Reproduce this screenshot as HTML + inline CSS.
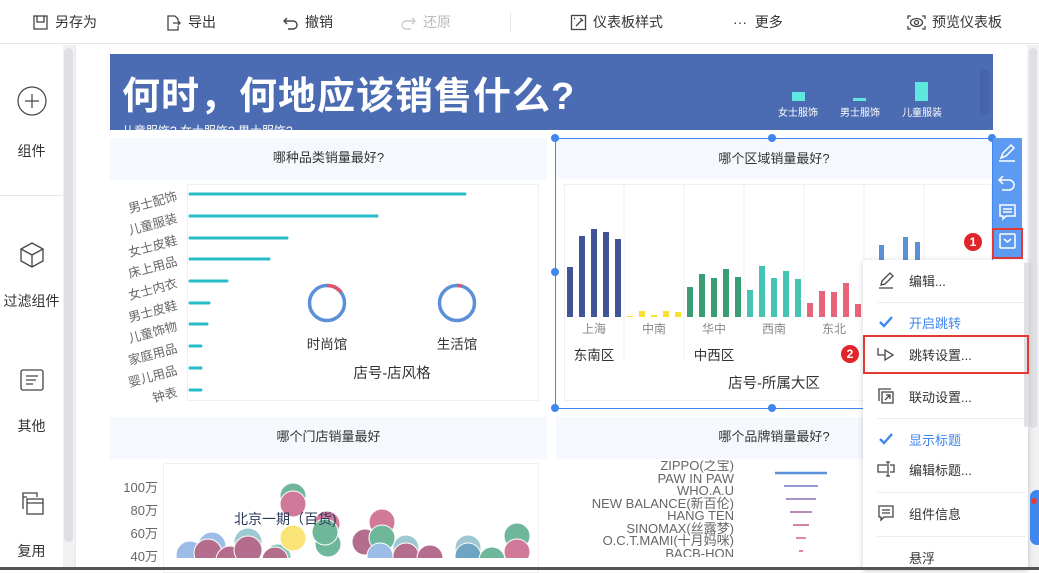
<!DOCTYPE html>
<html><head><meta charset="utf-8">
<style>
*{margin:0;padding:0;box-sizing:border-box}
body{width:1039px;height:570px;overflow:hidden;background:#fff;font-family:"Liberation Sans","Noto Sans CJK SC",sans-serif;position:relative;color:#333}
.a{position:absolute}
.tb{font-size:14px;color:#333;top:12px;display:flex;align-items:center;gap:6px}
.tb svg{width:17px;height:17px}
.side{font-size:14px;color:#333;text-align:center;width:63px;left:0}
.pt{background:#f5f8fd;font-size:13px;color:#333;text-align:center;line-height:40px}
.mi{position:absolute;left:0;width:165px;height:32px;font-size:13px;color:#333;display:flex;align-items:center}
.mi .ic{width:46px;display:flex;justify-content:center}
.sep{position:absolute;left:14px;width:148px;height:1px;background:#eee}
</style></head><body>
<!-- toolbar -->
<div class="a" style="left:0;top:0;width:1039px;height:44px;border-bottom:1px solid #e6e6e6"></div>
<div class="a tb" style="left:32px"><svg viewBox="0 0 17 17" fill="none" stroke="#444" stroke-width="1.3"><rect x="2" y="2" width="13" height="13"/><path d="M5 2v6h7V2"/></svg>另存为</div>
<div class="a tb" style="left:165px"><svg viewBox="0 0 17 17" fill="none" stroke="#444" stroke-width="1.3"><path d="M10 2H3v14h10v-4M10 2l3 3v2M8 9h7M13 7l2 2-2 2"/></svg>导出</div>
<div class="a tb" style="left:282px"><svg viewBox="0 0 17 17" fill="none" stroke="#444" stroke-width="1.4"><path d="M5 4L2 7l3 3M2 7h9a4 4 0 010 8H6"/></svg>撤销</div>
<div class="a tb" style="left:400px;color:#bbb"><svg viewBox="0 0 17 17" fill="none" stroke="#ccc" stroke-width="1.4"><path d="M12 4l3 3-3 3M15 7H6a4 4 0 000 8h5"/></svg>还原</div>
<div class="a" style="left:510px;top:12px;width:1px;height:20px;background:#e6e6e6"></div>
<div class="a tb" style="left:570px"><svg viewBox="0 0 17 17" fill="none" stroke="#444" stroke-width="1.3"><rect x="1.5" y="1.5" width="14" height="14"/><path d="M6 12l6-6M10 4l3 3M4 4l1 1"/></svg>仪表板样式</div>
<div class="a tb" style="left:733px">··· &nbsp;更多</div>
<div class="a tb" style="left:907px"><svg viewBox="0 0 19 17" style="width:19px" fill="none" stroke="#444" stroke-width="1.3"><path d="M1 5V2h3M15 2h3v3M18 12v3h-3M4 15H1v-3"/><ellipse cx="9.5" cy="8.5" rx="6" ry="4"/><circle cx="9.5" cy="8.5" r="2"/></svg>预览仪表板</div>

<!-- sidebar -->
<div class="a" style="left:63px;top:45px;width:12px;height:525px;background:#f1f1f3"></div>
<div class="a" style="left:64px;top:48px;width:9px;height:494px;background:#dfe0e4;border-radius:5px"></div>
<div class="a" style="left:75px;top:45px;width:1px;height:525px;background:#e8e8e8"></div>
<div class="a" style="left:0;top:195px;width:63px;height:1px;background:#e6e6e6"></div>
<svg class="a" style="left:17px;top:86px" width="30" height="30" viewBox="0 0 30 30" fill="none" stroke="#444" stroke-width="1.2"><circle cx="15" cy="15" r="14"/><path d="M15 8v14M8 15h14"/></svg>
<div class="a side" style="top:141px">组件</div>
<svg class="a" style="left:19px;top:241px" width="26" height="28" viewBox="0 0 26 28" fill="none" stroke="#444" stroke-width="1.3"><path d="M13 2l11 6v12l-11 6-11-6V8zM2 8l11 6 11-6M13 14v12"/></svg>
<div class="a side" style="top:291px;font-size:14px">过滤组件</div>
<svg class="a" style="left:20px;top:369px" width="24" height="22" viewBox="0 0 24 22" fill="none" stroke="#444" stroke-width="1.3"><rect x="1" y="1" width="22" height="20" rx="2"/><path d="M6 7h12M6 11h10M6 15h7"/></svg>
<div class="a side" style="top:416px">其他</div>
<svg class="a" style="left:20px;top:491px" width="24" height="26" viewBox="0 0 24 26" fill="none" stroke="#444" stroke-width="1.3"><path d="M3 18V2h14v4"/><rect x="7" y="8" width="16" height="15"/><path d="M7 12h16M3 6h4"/></svg>
<div class="a side" style="top:541px">复用</div>

<!-- right scrollbar -->
<div class="a" style="left:1027px;top:45px;width:12px;height:525px;background:#f1f1f3"></div>
<div class="a" style="left:1029px;top:48px;width:8px;height:380px;background:#dfe0e4;border-radius:4px"></div>

<!-- banner -->
<div class="a" style="left:110px;top:54px;width:883px;height:76px;background:#4b6cb3;overflow:hidden">
<div class="a" style="left:12px;top:19px;font-size:38px;font-weight:bold;color:#fff;letter-spacing:1px;white-space:nowrap;line-height:48px">何时，何地应该销售什么?</div>
<div class="a" style="left:12px;top:68px;font-size:12px;color:#fff;white-space:nowrap">儿童服饰? 女士服饰? 男士服饰?</div>
<div class="a" style="left:682px;top:38px;width:13px;height:9px;background:#5ee8e0"></div>
<div class="a" style="left:668px;top:50px;font-size:10px;color:#fff">女士服饰</div>
<div class="a" style="left:743px;top:44px;width:13px;height:3px;background:#5ee8e0"></div>
<div class="a" style="left:730px;top:50px;font-size:10px;color:#fff">男士服饰</div>
<div class="a" style="left:805px;top:28px;width:13px;height:19px;background:#5ee8e0"></div>
<div class="a" style="left:792px;top:50px;font-size:10px;color:#fff">儿童服装</div>
<div class="a" style="left:870px;top:16px;width:9px;height:45px;background:#4664ab;border-radius:4px"></div>
</div>

<!-- panel 1 -->
<div class="a pt" style="left:110px;top:138px;width:437px;height:42px">哪种品类销量最好?</div>
<div class="a" style="left:187px;top:184px;width:352px;height:217px;border:1px solid #f0f0f0"></div>
<svg class="a" style="left:100px;top:180px" width="450" height="230" font-family="Liberation Sans,Noto Sans CJK SC,sans-serif">
<g stroke="#26bcc8" stroke-width="3" stroke-linecap="round">
<line x1="90" y1="14" x2="365" y2="14"/><line x1="90" y1="36" x2="277" y2="36"/><line x1="90" y1="58" x2="187" y2="58"/><line x1="90" y1="79" x2="169" y2="79"/><line x1="90" y1="101" x2="127" y2="101"/><line x1="90" y1="123" x2="109" y2="123"/><line x1="90" y1="144" x2="107" y2="144"/><line x1="90" y1="166" x2="101" y2="166"/><line x1="90" y1="188" x2="101" y2="188"/><line x1="90" y1="210" x2="101" y2="210"/></g>
<g font-size="12.5" fill="#666" text-anchor="end">
<text transform="translate(78,20) rotate(-15)">男士配饰</text><text transform="translate(78,42) rotate(-15)">儿童服装</text><text transform="translate(78,64) rotate(-15)">女士皮鞋</text><text transform="translate(78,85) rotate(-15)">床上用品</text><text transform="translate(78,107) rotate(-15)">女士内衣</text><text transform="translate(78,129) rotate(-15)">男士皮鞋</text><text transform="translate(78,150) rotate(-15)">儿童饰物</text><text transform="translate(78,172) rotate(-15)">家庭用品</text><text transform="translate(78,194) rotate(-15)">婴儿用品</text><text transform="translate(78,216) rotate(-15)">钟表</text></g>
<circle cx="227" cy="123" r="17.5" fill="none" stroke="#5b8fd6" stroke-width="3.5"/>
<path d="M227 105.5A17.5 17.5 0 0 1 241 112" fill="none" stroke="#e0556a" stroke-width="3.5"/>
<circle cx="357" cy="123" r="17.5" fill="none" stroke="#5b8fd6" stroke-width="3.5"/>
<path d="M357 105.5A17.5 17.5 0 0 1 362 106" fill="none" stroke="#e0556a" stroke-width="3.5"/>
<text x="227" y="169" font-size="13.5" fill="#333" text-anchor="middle">时尚馆</text>
<text x="357" y="169" font-size="13.5" fill="#333" text-anchor="middle">生活馆</text>
<text x="292" y="198" font-size="14.5" fill="#333" text-anchor="middle">店号-店风格</text>
</svg>

<!-- panel 2 -->
<div class="a pt" style="left:556px;top:139px;width:436px;height:40px">哪个区域销量最好?</div>
<div class="a" style="left:564px;top:184px;width:428px;height:217px;border:1px solid #f0f0f0"></div>
<svg class="a" style="left:555px;top:180px" width="440" height="230" font-family="Liberation Sans,Noto Sans CJK SC,sans-serif">
<g stroke="#f0f0f0"><line x1="69" y1="4" x2="69" y2="180"/><line x1="129" y1="4" x2="129" y2="180"/><line x1="189" y1="4" x2="189" y2="140"/><line x1="249" y1="4" x2="249" y2="140"/><line x1="309" y1="4" x2="309" y2="140"/><line x1="369" y1="4" x2="369" y2="140"/></g>
<g fill="#3f5597"><rect x="12" y="87" width="6" height="50"/><rect x="24" y="56" width="6" height="81"/><rect x="36" y="49" width="6" height="88"/><rect x="48" y="52" width="6" height="85"/><rect x="60" y="59" width="6" height="78"/></g>
<g fill="#f6e12e"><rect x="72" y="136" width="6" height="1"/><rect x="84" y="131" width="6" height="6"/><rect x="96" y="135" width="6" height="2"/><rect x="108" y="131" width="6" height="6"/><rect x="120" y="132" width="6" height="5"/></g>
<g fill="#3a9d74"><rect x="132" y="107" width="6" height="30"/><rect x="144" y="94" width="6" height="43"/><rect x="156" y="98" width="6" height="39"/><rect x="168" y="89" width="6" height="48"/><rect x="180" y="97" width="6" height="40"/></g>
<g fill="#45c3b3"><rect x="192" y="110" width="6" height="27"/><rect x="204" y="86" width="6" height="51"/><rect x="216" y="98" width="6" height="39"/><rect x="228" y="91" width="6" height="46"/><rect x="240" y="99" width="6" height="38"/></g>
<g fill="#e8647a"><rect x="252" y="123" width="6" height="14"/><rect x="264" y="111" width="6" height="26"/><rect x="276" y="112" width="6" height="25"/><rect x="288" y="103" width="6" height="34"/><rect x="300" y="124" width="6" height="13"/></g>
<g fill="#5b8fd6"><rect x="324" y="65" width="5" height="72"/><rect x="348" y="57" width="5" height="80"/><rect x="360" y="62" width="5" height="75"/></g>
<g font-size="12" fill="#888" text-anchor="middle"><text x="39" y="153">上海</text><text x="99" y="153">中南</text><text x="159" y="153">华中</text><text x="219" y="153">西南</text><text x="279" y="153">东北</text></g>
<text x="39" y="180" font-size="13.5" fill="#333" text-anchor="middle">东南区</text>
<text x="159" y="180" font-size="13.5" fill="#333" text-anchor="middle">中西区</text>
<text x="219" y="208" font-size="14.5" fill="#333" text-anchor="middle">店号-所属大区</text>
</svg>
<!-- selection -->
<div class="a" style="left:555px;top:138px;width:438px;height:271px;border:1px solid #3f86ee"></div>
<div class="a" style="left:551px;top:134px;width:8px;height:8px;border-radius:50%;background:#3f86ee"></div>
<div class="a" style="left:768px;top:134px;width:8px;height:8px;border-radius:50%;background:#3f86ee"></div>
<div class="a" style="left:988px;top:134px;width:8px;height:8px;border-radius:50%;background:#3f86ee"></div>
<div class="a" style="left:551px;top:268px;width:8px;height:8px;border-radius:50%;background:#3f86ee"></div>
<div class="a" style="left:551px;top:404px;width:8px;height:8px;border-radius:50%;background:#3f86ee"></div>
<div class="a" style="left:768px;top:404px;width:8px;height:8px;border-radius:50%;background:#3f86ee"></div>

<!-- vertical toolbar -->
<div class="a" style="left:993px;top:138px;width:29px;height:120px;background:#5d9bf3"></div>
<svg class="a" style="left:993px;top:138px" width="29" height="120" fill="none" stroke="#fff" stroke-width="1.5">
<path d="M8 20l2-5 8-8 3 3-8 8-5 2zM6 23h16"/>
<path d="M10 38l-4 4 4 4M6 42h10a5 5 0 010 10H9"/>
<path d="M7 67h15v11h-9l-3 3v-3H7zM10 71h9M10 74h9"/>
<rect x="7" y="96" width="15" height="14" rx="1"/><path d="M11 101l3.5 3 3.5-3"/>
</svg>
<div class="a" style="left:992px;top:228px;width:31px;height:31px;border:2px solid #e53935"></div>
<div class="a" style="left:964px;top:233px;width:18px;height:18px;border-radius:50%;background:#e0262b;color:#fff;font-size:12px;font-weight:bold;text-align:center;line-height:18px">1</div>

<!-- panel 3 -->
<div class="a pt" style="left:110px;top:417px;width:437px;height:42px">哪个门店销量最好</div>
<div class="a" style="left:163px;top:463px;width:376px;height:110px;border:1px solid #f0f0f0"></div>
<div class="a" style="left:100px;top:476px;width:58px;font-size:13px;color:#666;text-align:right;line-height:23px">100万<br>80万<br>60万<br>40万</div>
<svg class="a" style="left:160px;top:460px" width="390" height="98">
<g opacity=".75" stroke="#fff" stroke-width="1">
<circle cx="30" cy="95" r="14" fill="#7aa7e0"/><circle cx="52" cy="86" r="14" fill="#7aa7e0"/><circle cx="48" cy="93" r="14" fill="#9b3d66"/>
<circle cx="70" cy="100" r="14" fill="#9b3d66"/><circle cx="88" cy="82" r="14" fill="#7fb8c4"/><circle cx="88" cy="90" r="14" fill="#9b3d66"/>
<circle cx="118" cy="97" r="13" fill="#5db59a"/><circle cx="115" cy="100" r="13" fill="#9b3d66"/>
<circle cx="133" cy="36" r="13" fill="#3f9f7a"/><circle cx="133" cy="44" r="13" fill="#c24d77"/>
<circle cx="133" cy="78" r="13" fill="#f9dc4b"/><circle cx="168" cy="84" r="13" fill="#3f9f7a"/><circle cx="167" cy="64" r="13" fill="#c24d77"/><circle cx="165" cy="72" r="13" fill="#3f9f7a"/>
<circle cx="205" cy="82" r="13" fill="#9b3d66"/><circle cx="222" cy="62" r="13" fill="#c24d77"/><circle cx="222" cy="78" r="13" fill="#3f9f7a"/><circle cx="220" cy="96" r="13" fill="#7aa7e0"/>
<circle cx="246" cy="88" r="13" fill="#7fb8c4"/><circle cx="246" cy="96" r="13" fill="#9b3d66"/><circle cx="270" cy="98" r="13" fill="#9b3d66"/>
<circle cx="308" cy="88" r="13" fill="#7fb8c4"/><circle cx="308" cy="96" r="13" fill="#3f86b0"/><circle cx="332" cy="100" r="13" fill="#3f9f7a"/>
<circle cx="357" cy="76" r="13" fill="#3f9f7a"/><circle cx="357" cy="92" r="13" fill="#c24d77"/>
</g>
<text x="74" y="64" font-size="14" fill="#2b3a5a" font-family="Liberation Sans,Noto Sans CJK SC,sans-serif">北京一期（百货)</text>
</svg>

<!-- panel 4 -->
<div class="a pt" style="left:556px;top:417px;width:436px;height:42px">哪个品牌销量最好?</div>
<div class="a" style="left:560px;top:460px;width:174px;font-size:13px;color:#666;text-align:right;line-height:12.5px;height:97px;overflow:hidden">ZIPPO(之宝)<br>PAW IN PAW<br>WHO.A.U<br>NEW BALANCE(新百伦)<br>HANG TEN<br>SINOMAX(丝露梦)<br>O.C.T.MAMI(十月妈咪)<br>BACB-HON</div>
<svg class="a" style="left:760px;top:465px" width="100" height="100"><g stroke-width="1.5">
<line x1="15" y1="8" x2="67" y2="8" stroke="#5b8fd6" stroke-width="2.5"/><line x1="24" y1="21" x2="58" y2="21" stroke="#6a78c4"/><line x1="26" y1="34" x2="56" y2="34" stroke="#8a70b8"/><line x1="30" y1="47" x2="52" y2="47" stroke="#a8619e"/><line x1="33" y1="60" x2="49" y2="60" stroke="#c05a85"/><line x1="36" y1="73" x2="46" y2="73" stroke="#d8607d"/><line x1="39" y1="86" x2="43" y2="86" stroke="#e0556a"/></g></svg>

<!-- menu -->
<div class="a" style="left:863px;top:260px;width:165px;height:310px;background:#fff;box-shadow:0 1px 6px rgba(0,0,0,.2);border-radius:3px">
<div class="a" style="left:161px;top:2px;width:4px;height:165px;background:#dfe0e4;border-radius:2px"></div>
<div class="mi" style="top:4px"><span class="ic"><svg width="18" height="18" fill="none" stroke="#444" stroke-width="1.3"><path d="M4 14l1-4 8-8 3 3-8 8zM2 17h14"/></svg></span>编辑...</div>
<div class="sep" style="top:42px"></div>
<div class="mi" style="top:46px;color:#3f86ee"><span class="ic"><svg width="16" height="14" fill="none" stroke="#3f86ee" stroke-width="2.4"><path d="M2 7l4 4 8-9"/></svg></span>开启跳转</div>
<div class="mi" style="top:78px"><span class="ic"><svg width="20" height="16" fill="none" stroke="#444" stroke-width="1.3"><path d="M2 2v7h7M9 4l8 5-8 5z"/></svg></span>跳转设置...</div>
<div class="mi" style="top:120px"><span class="ic"><svg width="18" height="18" fill="none" stroke="#444" stroke-width="1.3"><path d="M2 14V2h12"/><rect x="5" y="5" width="11" height="11"/><path d="M8 13l5-5M9 8h4v4"/></svg></span>联动设置...</div>
<div class="sep" style="top:158px"></div>
<div class="mi" style="top:163px;color:#3f86ee"><span class="ic"><svg width="16" height="14" fill="none" stroke="#3f86ee" stroke-width="2.4"><path d="M2 7l4 4 8-9"/></svg></span>显示标题</div>
<div class="mi" style="top:193px"><span class="ic"><svg width="20" height="18" fill="none" stroke="#444" stroke-width="1.3"><path d="M11 5H2v7h9M14 5h4v7h-4M12 2v14M10 2h4M10 16h4"/></svg></span>编辑标题...</div>
<div class="sep" style="top:232px"></div>
<div class="mi" style="top:237px"><span class="ic"><svg width="18" height="18" fill="none" stroke="#444" stroke-width="1.3"><path d="M2 2h14v11H7l-3 3v-3H2zM5 6h8M5 9h8"/></svg></span>组件信息</div>
<div class="sep" style="top:276px"></div>
<div class="mi" style="top:281px"><span class="ic"></span>悬浮</div>
</div>
<div class="a" style="left:863px;top:335px;width:166px;height:39px;border:2px solid #e53935"></div>
<div class="a" style="left:841px;top:345px;width:18px;height:18px;border-radius:50%;background:#e0262b;color:#fff;font-size:12px;font-weight:bold;text-align:center;line-height:18px">2</div>
<div class="a" style="left:1030px;top:490px;width:14px;height:55px;border-radius:8px;background:#3f86ee"></div>
<div class="a" style="left:1031px;top:498px;width:6px;height:6px;border-radius:50%;background:#e53935"></div>

<div class="a" style="left:0;top:567px;width:1039px;height:3px;background:#555"></div>
</body></html>
